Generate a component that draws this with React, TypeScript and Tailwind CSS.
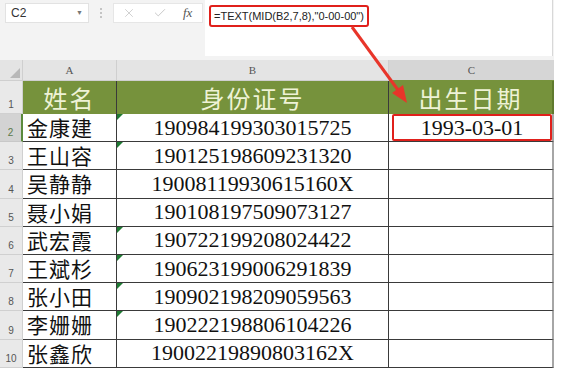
import { X, Check } from "lucide-react";

const people = [
    { name: "金康建", id: "190984199303015725", flag: true },
    { name: "王山容", id: "190125198609231320", flag: true },
    { name: "吴静静", id: "19008119930615160X", flag: false },
    { name: "聂小娟", id: "190108197509073127", flag: false },
    { name: "武宏霞", id: "190722199208024422", flag: true },
    { name: "王斌杉", id: "190623199006291839", flag: true },
    { name: "张小田", id: "190902198209059563", flag: true },
    { name: "李姗姗", id: "190222198806104226", flag: true },
    { name: "张鑫欣", id: "19002219890803162X", flag: false },
];

const CJK = "font-['SimSun','Noto_Sans_CJK_SC',serif]";
const NUM = "font-['Liberation_Serif','Noto_Sans_CJK_SC',serif]";

const Arrow = () => (
    <svg
        className="absolute inset-0 pointer-events-none"
        width={562}
        height={375}
        viewBox="0 0 562 375"
    >
        <line x1={352} y1={27} x2={398} y2={90} stroke="#e8352a" strokeWidth={3} />
        <polygon points="407,103 403,85 392,93" fill="#e8352a" />
    </svg>
);

const App = () => {
    return (
        <div className="relative w-[562px] h-[375px] bg-white overflow-hidden font-['Liberation_Sans',sans-serif]">
            {/* formula bar */}
            <div className="flex h-[60px] bg-[#f3f3f3] w-[554px]">
                <div className="flex flex-col pl-[5px] pt-[3px]">
                    <div className="flex items-center justify-between w-[84px] h-[20px] bg-white border border-[#e2e2e2] pl-[5px] pr-[5px]">
                        <span className="text-[12px] text-[#333]">C2</span>
                        <span className="text-[7px] text-[#777]">▼</span>
                    </div>
                </div>
                <div className="flex flex-col items-center w-[24px] pt-[8px] gap-[2px]">
                    <span className="w-[2px] h-[2px] bg-[#c4c4c4]" />
                    <span className="w-[2px] h-[2px] bg-[#c4c4c4]" />
                    <span className="w-[2px] h-[2px] bg-[#c4c4c4]" />
                </div>
                <div className="pt-[3px]">
                    <div className="flex items-center w-[90px] h-[20px] bg-white border border-[#e6e6e6]">
                        <X className="ml-[8px] text-[#bdbdbd]" size={14} strokeWidth={1.2} />
                        <Check className="ml-[17px] text-[#bdbdbd]" size={14} strokeWidth={1.4} />
                        <span className="ml-[16px] text-[13px] italic text-[#555] font-['Liberation_Serif',serif]">
                            fx
                        </span>
                    </div>
                </div>
                <div className="ml-[2px] w-[348px] h-[56px] bg-white border-r border-[#d8d8d8] pl-[4px] pt-[3px]">
                    <span className="inline-block border-2 border-[#e0201b] rounded-[3px] px-[3px] h-[22px] leading-[18px] text-[11px] text-[#222] font-['Liberation_Sans',sans-serif]">
                        =TEXT(MID(B2,7,8),"0-00-00")
                    </span>
                </div>
            </div>

            {/* sheet */}
            <div className="w-[554px]">
                <div className="grid grid-cols-[23px_94px_272px_165px] h-[21px] bg-[#e4e4e4] text-[11px] leading-none text-[#555] font-['Liberation_Serif',serif]">
                    <div className="relative border-r border-b border-[#cfcfcf]">
                        <div className="absolute right-[2px] bottom-[2px] w-0 h-0 border-l-[10px] border-l-transparent border-b-[10px] border-b-[#b8b8b8]" />
                    </div>
                    <div className="flex items-center justify-center border-r border-b border-[#cfcfcf]">A</div>
                    <div className="flex items-center justify-center border-r border-b border-[#cfcfcf]">B</div>
                    <div className="flex items-center justify-center bg-[#d6d6d6] border-b border-[#76923c]">C</div>
                </div>

                <div className="grid grid-cols-[23px_94px_272px_165px] h-[33px] leading-none">
                    <div className="flex items-end justify-center pb-[3px] bg-[#e9e9e9] border-r border-b border-[#d0d0d0] text-[10px] text-[#555]">
                        1
                    </div>
                    <div className={`flex items-center justify-center bg-[#76923c] border-r border-[#3a3a3a] text-[24px] tracking-[2px] text-[#eef2d6] ${CJK}`}>
                        姓名
                    </div>
                    <div className={`flex items-center justify-center bg-[#76923c] border-r border-[#3a3a3a] text-[24px] tracking-[2px] text-[#eef2d6] ${CJK}`}>
                        身份证号
                    </div>
                    <div className={`flex items-center justify-center bg-[#76923c] border-r-2 border-[#5f7a2d] text-[24px] tracking-[2px] text-[#eef2d6] ${CJK}`}>
                        出生日期
                    </div>
                </div>

                {people.map((p, i) => (
                    <div
                        key={p.id}
                        className="grid grid-cols-[23px_94px_272px_165px] h-[28.2px] leading-none"
                    >
                        <div
                            className={
                                i === 0
                                    ? "flex items-end justify-center pb-[3px] bg-[#d3d3d3] border-r-2 border-r-[#5b8a3c] border-b border-b-[#c8c8c8] text-[10px] text-[#5b7a4a]"
                                    : "flex items-end justify-center pb-[3px] bg-[#e9e9e9] border-r border-b border-[#d0d0d0] text-[10px] text-[#555]"
                            }
                        >
                            {i + 2}
                        </div>
                        <div className={`flex items-center pl-[4px] border-r border-b border-[#3a3a3a] text-[21px] tracking-[1px] text-[#111] ${CJK}`}>
                            {p.name}
                        </div>
                        <div className={`relative flex items-center justify-center border-r border-b border-[#3a3a3a] text-[22px] text-[#111] ${NUM}`}>
                            {p.flag && (
                                <div className="absolute left-0 top-0 w-0 h-0 border-t-[6px] border-t-[#1f7a33] border-r-[6px] border-r-transparent" />
                            )}
                            {p.id}
                        </div>
                        <div className="flex border-r-2 border-r-[#a6a6a6] border-b border-b-[#3a3a3a] pl-[3px]">
                            {i === 0 && (
                                <div className={`flex flex-1 items-center justify-center border-2 border-[#e0201b] rounded-[2px] text-[22px] text-[#111] ${NUM}`}>
                                    1993-03-01
                                </div>
                            )}
                        </div>
                    </div>
                ))}
            </div>

            <Arrow />
        </div>
    );
};

export default App;
